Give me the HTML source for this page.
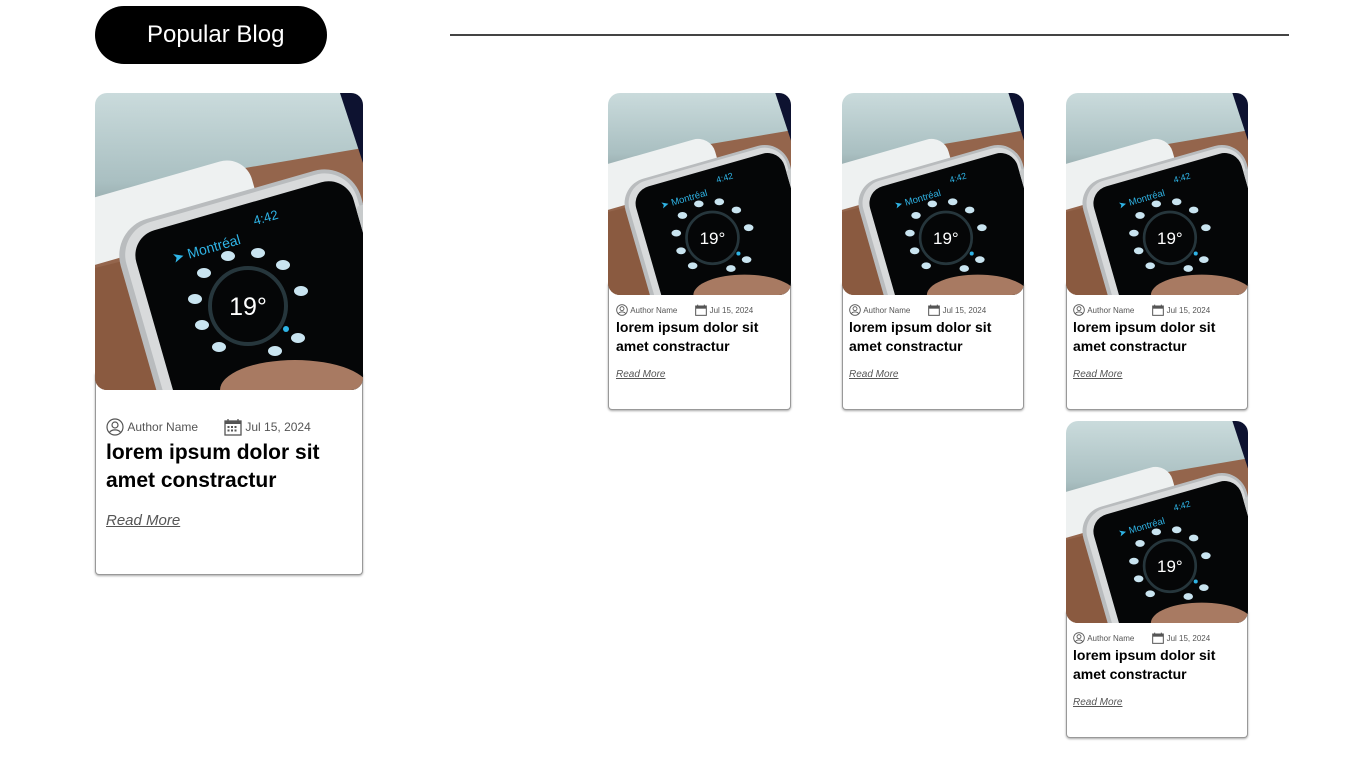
<!DOCTYPE html>
<html><head><meta charset="utf-8"><style>
*{margin:0;padding:0;box-sizing:border-box}
body{width:1366px;height:768px;background:#fff;position:relative;overflow:hidden;font-family:"Liberation Sans",sans-serif;color:#000}
.pill{position:absolute;left:95px;top:6px;width:232px;height:58px;background:#000;border-radius:29px;color:#fff;font-size:24px;line-height:58px;padding-left:52px}
.rule{position:absolute;left:450px;top:34px;width:839px;height:2px;background:#444}
.card{position:absolute}
.box{position:absolute;left:0;right:0;bottom:0;background:#fff;border:1px solid #999;border-top:none;border-radius:0 0 4px 4px;box-shadow:0 1px 2px rgba(0,0,0,.35)}
.img{position:absolute;left:0;top:0;overflow:hidden;border-radius:12px}
.img svg{display:block}
.meta{position:absolute;color:#555;white-space:nowrap;display:flex;align-items:center}
.meta svg{display:block}
.title{position:absolute;font-weight:bold;white-space:nowrap}
.rm{position:absolute;font-style:italic;text-decoration:underline;color:#555}
</style></head><body>
<svg width="0" height="0" style="position:absolute">
<defs>
<linearGradient id="bg" x1="0" y1="0" x2="0" y2="1">
<stop offset="0" stop-color="#cadbdc"/><stop offset=".3" stop-color="#a9bfc1"/><stop offset=".5" stop-color="#7d8e8f"/><stop offset="1" stop-color="#6a5045"/></linearGradient>
<symbol id="w" viewBox="0 0 268 297" preserveAspectRatio="none">
<rect width="268" height="297" fill="url(#bg)"/>
<polygon points="150,75 268,55 268,297 0,297 0,160" fill="#94654c"/>
<polygon points="0,175 60,160 90,297 0,297" fill="#8a5a40"/>
<polygon points="245,0 268,0 268,70" fill="#0d1230"/>
<g transform="rotate(-16 40 150)">
<rect x="-40" y="95" width="210" height="65" rx="26" fill="#eef1f1"/>
<rect x="20" y="130" width="250" height="236" rx="38" fill="#b9bcbe"/>
<rect x="26" y="134" width="240" height="226" rx="34" fill="#d8dadb"/>
<rect x="36" y="143" width="226" height="215" rx="26" fill="#050607"/>
<rect x="262" y="176" width="10" height="30" rx="4" fill="#c8cbcc"/>
<text x="72" y="180" fill="#2fb4e6" font-size="14" font-family="Liberation Sans">➤ Montréal</text>
<text x="160" y="166" fill="#2fb4e6" font-size="13" font-family="Liberation Sans">4:42</text>
</g>
<circle cx="153" cy="213" r="38" fill="none" stroke="#26363c" stroke-width="4"/>
<text x="153" y="222" fill="#fff" font-size="25" text-anchor="middle" font-family="Liberation Sans">19°</text>
<g fill="#c9e4f0">
<ellipse cx="133" cy="163" rx="7" ry="5"/><ellipse cx="163" cy="160" rx="7" ry="5"/><ellipse cx="188" cy="172" rx="7" ry="5"/><ellipse cx="206" cy="198" rx="7" ry="5"/><ellipse cx="109" cy="180" rx="7" ry="5"/><ellipse cx="100" cy="206" rx="7" ry="5"/><ellipse cx="107" cy="232" rx="7" ry="5"/><ellipse cx="124" cy="254" rx="7" ry="5"/><ellipse cx="180" cy="258" rx="7" ry="5"/><ellipse cx="203" cy="245" rx="7" ry="5"/></g>
<circle cx="191" cy="236" r="3" fill="#2fb4e6"/>
<ellipse cx="200" cy="297" rx="75" ry="30" fill="#a87a62"/>
</symbol>
</defs></svg>

<div class="pill">Popular Blog</div>
<div class="rule"></div>

<div class="card" style="left:95px;top:93px;width:268px;height:482px">
<div class="box" style="top:280px"></div>
<div class="img" style="width:268px;height:297px"><svg width="268" height="297"><use href="#w"/></svg></div>
<div class="meta" style="left:11px;top:325px;font-size:12px"><svg width="18" height="18" viewBox="0 0 18 18"><circle cx="9" cy="9" r="8" fill="none" stroke="#555" stroke-width="1.2"/><circle cx="9" cy="7" r="3" fill="none" stroke="#555" stroke-width="1.2"/><path d="M3.5 14.5c2-3.5 9-3.5 11 0" fill="none" stroke="#555" stroke-width="1.2"/></svg>&nbsp;Author Name<span style="width:26px"></span><svg width="18" height="18" viewBox="0 0 18 18"><rect x="1" y="3" width="16" height="14" fill="none" stroke="#555" stroke-width="1.3"/><rect x="1" y="3" width="16" height="3" fill="#555"/><path d="M4 1v4M14 1v4" stroke="#555" stroke-width="1.3"/><g fill="#555"><rect x="3.5" y="8" width="2" height="2"/><rect x="7" y="8" width="2" height="2"/><rect x="10.5" y="8" width="2" height="2"/><rect x="3.5" y="11.5" width="2" height="2"/><rect x="7" y="11.5" width="2" height="2"/><rect x="10.5" y="11.5" width="2" height="2"/></g></svg>&nbsp;Jul 15, 2024</div>
<div class="title" style="left:11px;top:346px;font-size:21px;line-height:28px">lorem ipsum dolor sit<br>amet constractur</div>
<div class="rm" style="left:11px;top:419px;font-size:15px">Read More</div>
</div>

<div class="card" style="left:608px;top:93px;width:183px;height:317px"><div class="box" style="top:190px"></div><div class="img" style="width:183px;height:202px"><svg width="183" height="202"><use href="#w"/></svg></div><div class="meta" style="left:8px;top:211px;font-size:8px"><svg width="12" height="12" viewBox="0 0 18 18"><circle cx="9" cy="9" r="8" fill="none" stroke="#555" stroke-width="1.3"/><circle cx="9" cy="7" r="3" fill="none" stroke="#555" stroke-width="1.3"/><path d="M3.5 14.5c2-3.5 9-3.5 11 0" fill="none" stroke="#555" stroke-width="1.3"/></svg>&nbsp;Author Name<span style="width:18px"></span><svg width="12" height="12" viewBox="0 0 18 18"><rect x="1" y="3" width="16" height="14" fill="none" stroke="#555" stroke-width="1.5"/><rect x="1" y="3" width="16" height="4" fill="#555"/><path d="M4 1v4M14 1v4" stroke="#555" stroke-width="1.5"/></svg>&nbsp;Jul 15, 2024</div><div class="title" style="left:8px;top:225px;font-size:14px;line-height:19px">lorem ipsum dolor sit<br>amet constractur</div><div class="rm" style="left:8px;top:276px;font-size:10px">Read More</div></div>

<div class="card" style="left:842px;top:93px;width:182px;height:317px"><div class="box" style="top:190px"></div><div class="img" style="width:182px;height:202px"><svg width="182" height="202"><use href="#w"/></svg></div><div class="meta" style="left:7px;top:211px;font-size:8px"><svg width="12" height="12" viewBox="0 0 18 18"><circle cx="9" cy="9" r="8" fill="none" stroke="#555" stroke-width="1.3"/><circle cx="9" cy="7" r="3" fill="none" stroke="#555" stroke-width="1.3"/><path d="M3.5 14.5c2-3.5 9-3.5 11 0" fill="none" stroke="#555" stroke-width="1.3"/></svg>&nbsp;Author Name<span style="width:18px"></span><svg width="12" height="12" viewBox="0 0 18 18"><rect x="1" y="3" width="16" height="14" fill="none" stroke="#555" stroke-width="1.5"/><rect x="1" y="3" width="16" height="4" fill="#555"/><path d="M4 1v4M14 1v4" stroke="#555" stroke-width="1.5"/></svg>&nbsp;Jul 15, 2024</div><div class="title" style="left:7px;top:225px;font-size:14px;line-height:19px">lorem ipsum dolor sit<br>amet constractur</div><div class="rm" style="left:7px;top:276px;font-size:10px">Read More</div></div>

<div class="card" style="left:1066px;top:93px;width:182px;height:317px"><div class="box" style="top:190px"></div><div class="img" style="width:182px;height:202px"><svg width="182" height="202"><use href="#w"/></svg></div><div class="meta" style="left:7px;top:211px;font-size:8px"><svg width="12" height="12" viewBox="0 0 18 18"><circle cx="9" cy="9" r="8" fill="none" stroke="#555" stroke-width="1.3"/><circle cx="9" cy="7" r="3" fill="none" stroke="#555" stroke-width="1.3"/><path d="M3.5 14.5c2-3.5 9-3.5 11 0" fill="none" stroke="#555" stroke-width="1.3"/></svg>&nbsp;Author Name<span style="width:18px"></span><svg width="12" height="12" viewBox="0 0 18 18"><rect x="1" y="3" width="16" height="14" fill="none" stroke="#555" stroke-width="1.5"/><rect x="1" y="3" width="16" height="4" fill="#555"/><path d="M4 1v4M14 1v4" stroke="#555" stroke-width="1.5"/></svg>&nbsp;Jul 15, 2024</div><div class="title" style="left:7px;top:225px;font-size:14px;line-height:19px">lorem ipsum dolor sit<br>amet constractur</div><div class="rm" style="left:7px;top:276px;font-size:10px">Read More</div></div>

<div class="card" style="left:1066px;top:421px;width:182px;height:317px"><div class="box" style="top:190px"></div><div class="img" style="width:182px;height:202px"><svg width="182" height="202"><use href="#w"/></svg></div><div class="meta" style="left:7px;top:211px;font-size:8px"><svg width="12" height="12" viewBox="0 0 18 18"><circle cx="9" cy="9" r="8" fill="none" stroke="#555" stroke-width="1.3"/><circle cx="9" cy="7" r="3" fill="none" stroke="#555" stroke-width="1.3"/><path d="M3.5 14.5c2-3.5 9-3.5 11 0" fill="none" stroke="#555" stroke-width="1.3"/></svg>&nbsp;Author Name<span style="width:18px"></span><svg width="12" height="12" viewBox="0 0 18 18"><rect x="1" y="3" width="16" height="14" fill="none" stroke="#555" stroke-width="1.5"/><rect x="1" y="3" width="16" height="4" fill="#555"/><path d="M4 1v4M14 1v4" stroke="#555" stroke-width="1.5"/></svg>&nbsp;Jul 15, 2024</div><div class="title" style="left:7px;top:225px;font-size:14px;line-height:19px">lorem ipsum dolor sit<br>amet constractur</div><div class="rm" style="left:7px;top:276px;font-size:10px">Read More</div></div>
</body></html>
